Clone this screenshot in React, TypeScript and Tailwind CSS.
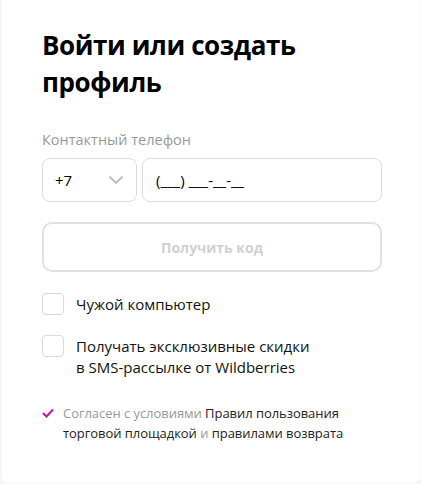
import React, { useState } from 'react';

const Checkbox = ({ checked, onChange }: { checked: boolean; onChange: () => void }) => (
  <button
    type="button"
    onClick={onChange}
    className="w-[22px] h-[22px] shrink-0 rounded-[4px] border border-[#d9d9d9] bg-white flex items-center justify-center"
  >
    {checked && (
      <svg width="12" height="10" viewBox="0 0 12 10" fill="none">
        <path d="M1 5l3.5 3.5L11 1.5" stroke="#cb11ab" strokeWidth="2" strokeLinecap="round" />
      </svg>
    )}
  </button>
);

export default function App() {
  const [foreign, setForeign] = useState(false);
  const [sms, setSms] = useState(false);
  const [phone, setPhone] = useState('');

  return (
    <div className="h-[484px] bg-[#f6f6f6] pl-[2px] pr-[1px] pb-[1px] font-['Open_Sans',sans-serif]">
      <div className="h-full bg-white rounded-b-[8px] pl-[40px] pr-[38px] pt-[27px]">
        <h1 className="text-[26px] leading-[37px] font-bold tracking-[-0.4px] text-black w-[300px]">
          Войти или создать профиль
        </h1>

        <label className="block mt-[29px] text-[14.5px] leading-[20px] text-[#999]">Контактный телефон</label>

        <div className="flex gap-[5px] mt-[8px]">
          <button
            type="button"
            className="w-[95px] h-[44px] rounded-[8px] border border-[#dcdcdc] flex items-center justify-between pl-[12px] pr-[12px] text-[15px] text-black"
          >
            <span>+7</span>
            <svg width="16" height="10" viewBox="0 0 16 10" fill="none">
              <path d="M1.5 1.5L8 8l6.5-6.5" stroke="#bbb" strokeWidth="1.8" />
            </svg>
          </button>
          <input
            value={phone}
            onChange={(e) => setPhone(e.target.value)}
            placeholder="(___) ___-__-__"
            className="flex-1 min-w-0 h-[44px] rounded-[8px] border border-[#dcdcdc] px-[13px] text-[15px] text-black placeholder:text-black outline-none"
          />
        </div>

        <button
          type="button"
          disabled
          className="mt-[20px] w-full h-[50px] rounded-[10px] border-2 border-[#e0e0e0] text-[14px] font-bold text-[#d0d0d0]"
        >
          Получить код
        </button>

        <div className="mt-[21px] flex items-center gap-[12px]">
          <Checkbox checked={foreign} onChange={() => setForeign(!foreign)} />
          <span className="text-[15px] leading-[21px] text-[#111]">Чужой компьютер</span>
        </div>

        <div className="mt-[20px] flex items-start gap-[12px]">
          <Checkbox checked={sms} onChange={() => setSms(!sms)} />
          <span className="text-[15px] leading-[21px] text-[#111] pt-[1px]">
            Получать эксклюзивные скидки
            <br />в SMS-рассылке от Wildberries
          </span>
        </div>

        <div className="mt-[25px] flex items-start gap-[9px]">
          <svg width="12" height="10" viewBox="0 0 12 10" fill="none" className="mt-[5px] shrink-0">
            <path d="M1 5l3.5 3.5L11 1.5" stroke="#cb11ab" strokeWidth="2" />
          </svg>
          <p className="text-[13px] leading-[20px] tracking-[-0.05px] text-[#999]">
            Согласен с условиями <span className="text-[#222]">Правил пользования</span>
            <br />
            <span className="text-[#222]">торговой площадкой</span> и{' '}
            <span className="text-[#222]">правилами возврата</span>
          </p>
        </div>
      </div>
    </div>
  );
}
